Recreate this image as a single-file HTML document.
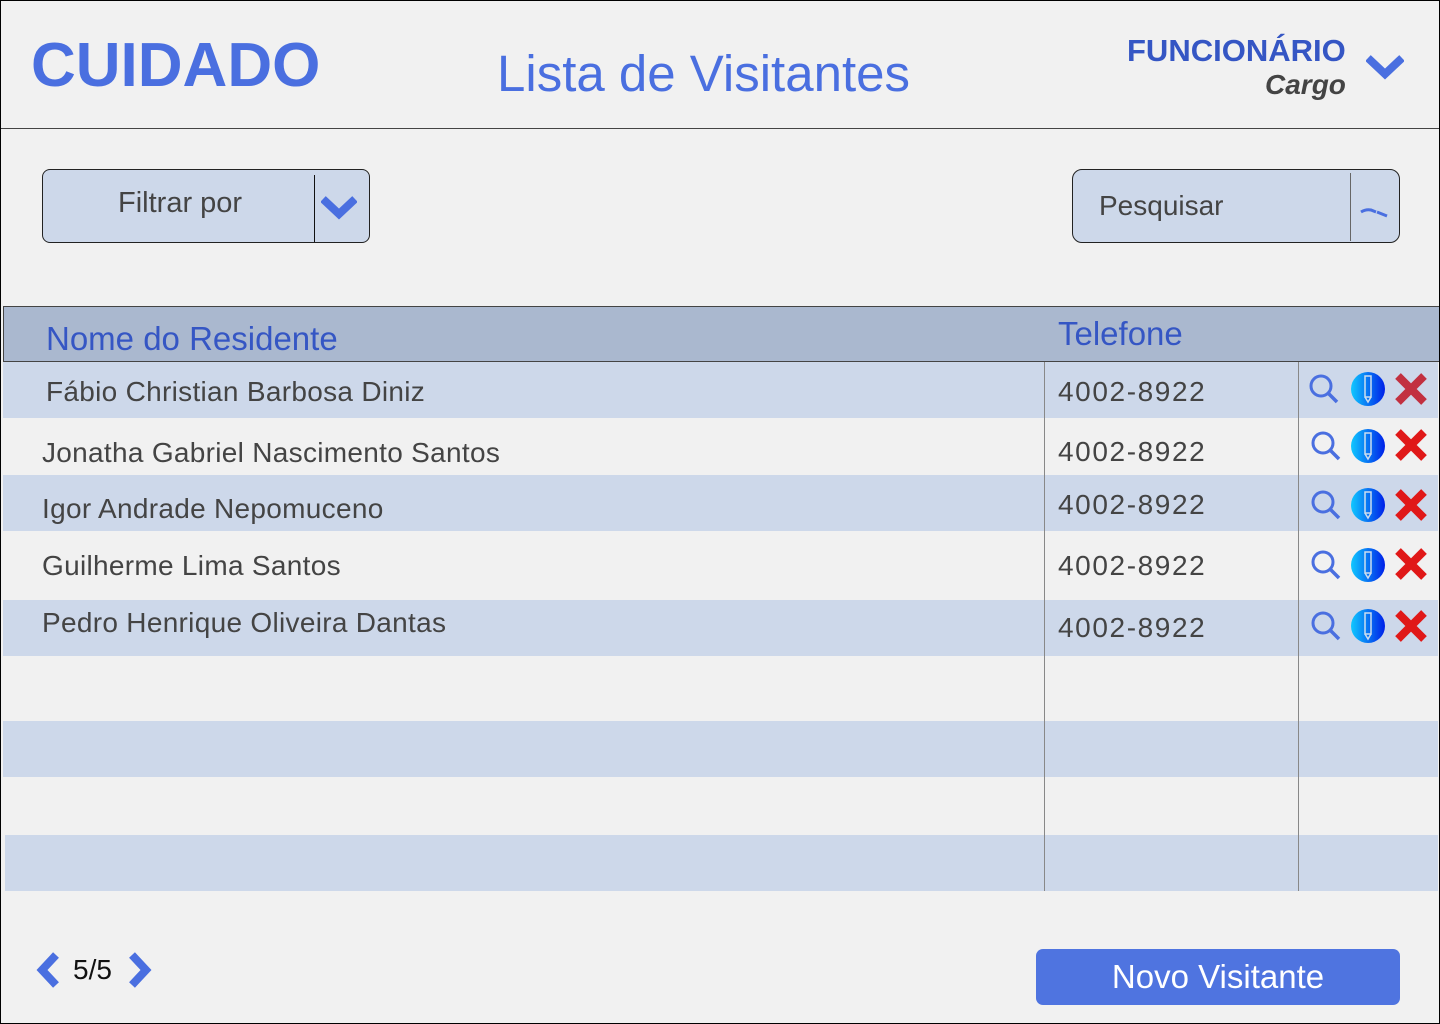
<!DOCTYPE html>
<html><head><meta charset="utf-8"><style>
*{margin:0;padding:0;box-sizing:border-box}
body{width:1440px;height:1024px;background:#f1f1f1;font-family:"Liberation Sans",sans-serif;position:relative;overflow:hidden}
.a{position:absolute;white-space:nowrap}
.row{position:absolute;left:3px;right:2px;background:#cdd8ea}
.t{position:absolute;font-size:28px;letter-spacing:0.3px;color:#444;white-space:nowrap;line-height:1}
.p{letter-spacing:1.6px}
.ic{position:absolute;width:130px;height:36px}
</style></head><body>
<div class="a" style="left:0;top:0;width:1440px;height:1024px;border:1px solid #000;z-index:5;pointer-events:none"></div>
<div class="a" style="left:31px;top:30px;font-size:62px;font-weight:bold;color:#4a6fe0;line-height:72px">CUIDADO</div>
<div class="a" style="left:497px;top:45px;font-size:51px;color:#4a6fe0;line-height:58px">Lista de Visitantes</div>
<div class="a" style="left:1127px;top:33px;font-size:31px;font-weight:bold;color:#3556c4;line-height:36px">FUNCIONÁRIO</div>
<div class="a" style="left:1265px;top:68px;font-size:28px;font-weight:bold;font-style:italic;color:#444;line-height:34px">Cargo</div>
<svg class="a" style="left:1366px;top:54px" width="38" height="26" viewBox="0 0 38 26"><path d="M2 4 L19 20 L36 4" stroke="#4a6fe0" stroke-width="8" fill="none"/></svg>
<div class="a" style="left:0;top:128px;width:1440px;height:1px;background:#444"></div>

<div class="a" style="left:42px;top:169px;width:328px;height:74px;background:#cdd8ea;border:1px solid #222;border-radius:8px"></div>
<div class="a" style="left:314px;top:175px;width:1px;height:67px;background:#111"></div>
<div class="a" style="left:118px;top:187px;font-size:29px;color:#444;line-height:32px">Filtrar por</div>
<svg class="a" style="left:321px;top:196px" width="36" height="24" viewBox="0 0 36 24"><path d="M2 3 L18 18 L34 3" stroke="#4a6fe0" stroke-width="8" fill="none"/></svg>

<div class="a" style="left:1072px;top:169px;width:328px;height:74px;background:#cdd8ea;border:1px solid #222;border-radius:10px"></div>
<div class="a" style="left:1350px;top:173px;width:1px;height:68px;background:#666"></div>
<div class="a" style="left:1099px;top:190px;font-size:28px;color:#444;line-height:32px">Pesquisar</div>
<svg class="a" style="left:1360px;top:206px" width="30" height="14"><path d="M1 6 Q6 3 11 4 L16 6 M17 6 L27 10" stroke="#4a6fe0" stroke-width="3" fill="none"/></svg>

<div class="a" style="left:3px;top:306px;width:1437px;height:56px;background:#aab8cf;border:1px solid #444;border-right:none"></div>
<div class="a" style="left:46px;top:320px;font-size:33px;color:#3556c4;line-height:38px">Nome do Residente</div>
<div class="a" style="left:1058px;top:315px;font-size:33px;color:#3556c4;line-height:38px">Telefone</div>

<div class="row" style="top:362px;height:56px"></div>
<div class="row" style="top:475px;height:56px"></div>
<div class="row" style="top:600px;height:56px"></div>
<div class="row" style="top:721px;height:56px"></div>
<div class="row" style="top:835px;height:56px;left:5px"></div>
<div class="a" style="left:1044px;top:362px;width:1px;height:529px;background:#888"></div>
<div class="a" style="left:1298px;top:362px;width:1px;height:529px;background:#888"></div>

<div class="t" style="left:46px;top:378px">Fábio Christian Barbosa Diniz</div>
<div class="t" style="left:42px;top:439px">Jonatha Gabriel Nascimento Santos</div>
<div class="t" style="left:42px;top:495px">Igor Andrade Nepomuceno</div>
<div class="t" style="left:42px;top:552px">Guilherme Lima Santos</div>
<div class="t" style="left:42px;top:609px">Pedro Henrique Oliveira Dantas</div>
<div class="t p" style="left:1058px;top:378px">4002-8922</div>
<div class="t p" style="left:1058px;top:438px">4002-8922</div>
<div class="t p" style="left:1058px;top:491px">4002-8922</div>
<div class="t p" style="left:1058px;top:552px">4002-8922</div>
<div class="t p" style="left:1058px;top:614px">4002-8922</div>

<svg width="0" height="0" style="position:absolute"><defs><linearGradient id="g" x1="0" x2="1"><stop offset="0" stop-color="#10c8ff"/><stop offset="1" stop-color="#0020e8"/></linearGradient></defs></svg>
<svg class="ic" style="left:1306px;top:371px" viewBox="0 0 130 36"><circle cx="15" cy="15" r="10" stroke="#4a6fe0" stroke-width="3" fill="none"/><path d="M22 22 L31 31" stroke="#4a6fe0" stroke-width="3.5"/><circle cx="62" cy="18" r="17" fill="url(#g)"/><rect x="59" y="5" width="6" height="21" fill="none" stroke="#cde" stroke-width="1.5"/><path d="M59 26 L62 31 L65 26" fill="none" stroke="#cde" stroke-width="1.5"/><path d="M92 5 L118 31 M118 5 L92 31" stroke="#c23040" stroke-width="8"/></svg>
<svg class="ic" style="left:1308px;top:428px" viewBox="0 0 130 36"><circle cx="15" cy="15" r="10" stroke="#4a6fe0" stroke-width="3" fill="none"/><path d="M22 22 L31 31" stroke="#4a6fe0" stroke-width="3.5"/><circle cx="60" cy="18" r="17" fill="url(#g)"/><rect x="57" y="5" width="6" height="21" fill="none" stroke="#cde" stroke-width="1.5"/><path d="M57 26 L60 31 L63 26" fill="none" stroke="#cde" stroke-width="1.5"/><path d="M90 4 L116 30 M116 4 L90 30" stroke="#e01818" stroke-width="8"/></svg>
<svg class="ic" style="left:1308px;top:487px" viewBox="0 0 130 36"><circle cx="15" cy="15" r="10" stroke="#4a6fe0" stroke-width="3" fill="none"/><path d="M22 22 L31 31" stroke="#4a6fe0" stroke-width="3.5"/><circle cx="60" cy="18" r="17" fill="url(#g)"/><rect x="57" y="5" width="6" height="21" fill="none" stroke="#cde" stroke-width="1.5"/><path d="M57 26 L60 31 L63 26" fill="none" stroke="#cde" stroke-width="1.5"/><path d="M90 5 L116 31 M116 5 L90 31" stroke="#e01818" stroke-width="8"/></svg>
<svg class="ic" style="left:1308px;top:547px" viewBox="0 0 130 36"><circle cx="15" cy="15" r="10" stroke="#4a6fe0" stroke-width="3" fill="none"/><path d="M22 22 L31 31" stroke="#4a6fe0" stroke-width="3.5"/><circle cx="60" cy="18" r="17" fill="url(#g)"/><rect x="57" y="5" width="6" height="21" fill="none" stroke="#cde" stroke-width="1.5"/><path d="M57 26 L60 31 L63 26" fill="none" stroke="#cde" stroke-width="1.5"/><path d="M90 4 L116 30 M116 4 L90 30" stroke="#e01818" stroke-width="8"/></svg>
<svg class="ic" style="left:1308px;top:608px" viewBox="0 0 130 36"><circle cx="15" cy="15" r="10" stroke="#4a6fe0" stroke-width="3" fill="none"/><path d="M22 22 L31 31" stroke="#4a6fe0" stroke-width="3.5"/><circle cx="60" cy="18" r="17" fill="url(#g)"/><rect x="57" y="5" width="6" height="21" fill="none" stroke="#cde" stroke-width="1.5"/><path d="M57 26 L60 31 L63 26" fill="none" stroke="#cde" stroke-width="1.5"/><path d="M90 5 L116 31 M116 5 L90 31" stroke="#e01818" stroke-width="8"/></svg>

<svg class="a" style="left:36px;top:952px" width="26" height="36"><path d="M20 3 L6 18 L20 33" stroke="#4a6fe0" stroke-width="8" fill="none"/></svg>
<div class="a" style="left:73px;top:954px;font-size:28px;color:#111;line-height:32px">5/5</div>
<svg class="a" style="left:126px;top:952px" width="26" height="36"><path d="M6 3 L20 18 L6 33" stroke="#4a6fe0" stroke-width="8" fill="none"/></svg>

<div class="a" style="left:1036px;top:949px;width:364px;height:56px;background:#4f74e0;border-radius:7px;color:#fff;font-size:33px;text-align:center;line-height:56px">Novo Visitante</div>
</body></html>
